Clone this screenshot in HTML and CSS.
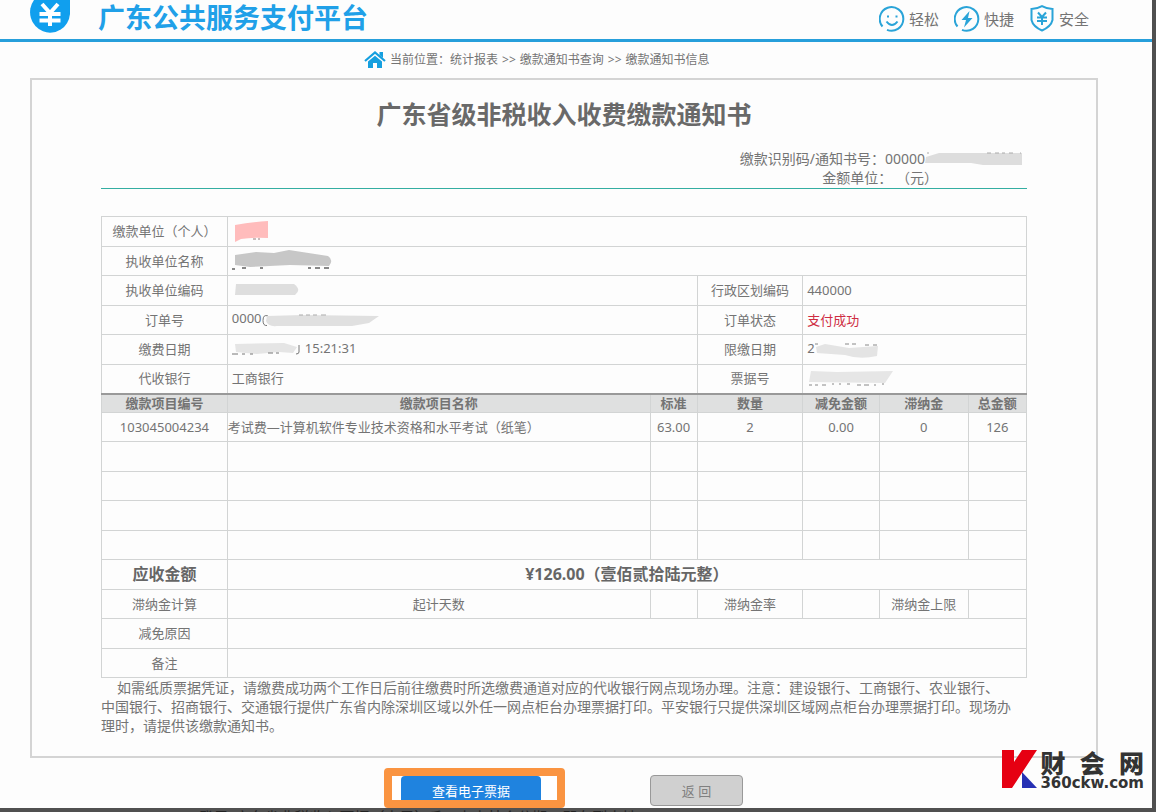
FILE: index.html
```html
<!DOCTYPE html>
<html lang="zh-CN">
<head>
<meta charset="utf-8">
<title>广东公共服务支付平台</title>
<link rel="stylesheet" href="styles.css">
</head>
<body>
<div class="page">
  <header class="top">
    <svg class="logo" width="40" height="35" viewBox="0 0 40 35" aria-hidden="true"><path d="M4 0H40V14A20 20.500 0 1 1 4 0Z" fill="#109fee"/><path d="M12 4l8 9 8-9M20 13v13M9.500 14h21M9.500 20.500h21" fill="none" stroke="#fff" stroke-width="4"/></svg>
    <h1 class="brand">广东公共服务支付平台</h1>
    <ul class="perks">
      <li><svg width="26" height="26" viewBox="0 0 26 26"><path d="M3.500 20.500A11.800 11.800 0 1 1 8 23.800" /><path d="M7.500 15.500q5.500 7 11 0"/><path class="solid" d="M8 9.500h2v2H8zM16.500 9.500h2v2h-2z"/></svg>轻松</li>
      <li><svg width="26" height="26" viewBox="0 0 26 26"><path d="M3.500 20.500A11.800 11.800 0 1 1 8 23.800"/><path class="solid" d="M15.500 5L7.500 14h4.500l-2 7.500L18.500 12H14z"/></svg>快捷</li>
      <li><svg width="26" height="27" viewBox="0 0 26 27"><path d="M13 1.200Q18 4 23.500 4V15Q22 21.500 13 25.500Q4 21.500 2.500 15V4Q8 4 13 1.200Z"/><path d="M9 7.500l4 4.500 4-4.500M13 12v8M8 12.500h10M8 16h10"/></svg>安全</li>
    </ul>
  </header>

  <nav class="crumbs">
    <svg width="22" height="18" viewBox="0 0 22 18" aria-hidden="true"><path d="M1 10L11 1.500 21 10" fill="none" stroke="#159fdf" stroke-width="2.200"/><path d="M15.500 1H19v6l-3.500-3z" fill="#159fdf"/><path d="M4 10.500L11 4.800l7 5.700V17h-5v-5H9v5H4z" fill="#159fdf"/></svg>
    <span>当前位置：</span><span>统计报表</span><span class="sep">&gt;&gt;</span><span>缴款通知书查询</span><span class="sep">&gt;&gt;</span><span>缴款通知书信息</span>
  </nav>

  <main class="sheet">
    <h2 class="title">广东省级非税收入收费缴款通知书</h2>
    <div class="meta">
      <div class="meta-row">缴款识别码/通知书号：00000<svg width="102" height="20" viewBox="0 0 102 20"><path d="M1 8L14 4 97 4V16H58L46 14H0Z" fill="#ddd"/><path d="M2 4h2M62 4h4M70 4h4M77 4h3M84 4h4M95 4h1" stroke="#aaa"/></svg></div>
      <div class="meta-row unit">金额单位：&nbsp;（元）</div>
    </div>

    <table class="bill">
      <colgroup><col class="c1"><col class="c2"><col class="c3"><col class="c4"><col class="c5"><col class="c6"><col class="c7"></colgroup>
      <tbody>
        <tr><th>缴款单位（个人）</th><td class="val" colspan="6"><svg width="60" height="24" viewBox="0 0 60 24"><path d="M3 6Q20 3 36 2V19Q20 18 9 20L3 23Z" fill="#ffbcbc"/><path d="M21 20h3M26 20h2" stroke="#957b7b"/></svg></td></tr>
        <tr><th>执收单位名称</th><td class="val" colspan="6"><svg width="110" height="24" viewBox="0 0 110 24"><path d="M3 6L24 3 42 4 57 1 96 7Q102 11 97 17L58 16 18 18 3 16Z" fill="#c7c7c7"/><path d="M0 20h3M10 19h4M28 19h3M76 19h3M83 19h5M92 19h5" stroke="#888" stroke-width="2"/></svg></td></tr>
        <tr><th>执收单位编码</th><td class="val" colspan="2"><svg width="80" height="20" viewBox="0 0 80 20"><path d="M4 4H62Q70 10 63 15H3Z" fill="#dedede"/></svg></td><th>行政区划编码</th><td class="val" colspan="3">440000</td></tr>
        <tr><th>订单号</th><td class="val" colspan="2">0000<svg width="130" height="20" viewBox="0 0 130 20"><path d="M6 6Q1 4 1 10.500Q1 16 5 15.500" fill="none" stroke="#777"/><path d="M5 6L40 5 117 6 107 13 90 16H15Q6 17 4 11Z" fill="#e0e0e0"/><path d="M37 5h4M44 5h4M51 5h4M59 5h5" stroke="#aaa"/></svg></td><th>订单状态</th><td class="val paid" colspan="3">支付成功</td></tr>
        <tr><th>缴费日期</th><td class="val" colspan="2"><svg width="73" height="20" viewBox="0 0 73 20"><path d="M3 5L52 4 65 8 61 14 47 13 25 15 4 13Z" fill="#e5e5e5"/><path d="M0 15h6M10 15h3M18 15h3M36 14h5M44 14h3M67 6v7q0 2-3 2" fill="none" stroke="#777"/></svg>15:21:31</td><th>限缴日期</th><td class="val" colspan="3">2<svg width="70" height="20" viewBox="0 0 70 20"><path d="M1 8L10 5 34 9 63 7 62 17Q45 21 30 16L2 14Z" fill="#e4e4e4"/><path d="M0 5h3M30 5h4M37 5h4M50 6h4M58 6h4" stroke="#888"/></svg></td></tr>
        <tr><th>代收银行</th><td class="val" colspan="2">工商银行</td><th>票据号</th><td class="val" colspan="3"><svg width="90" height="20" viewBox="0 0 90 20"><path d="M4 2L30 3 86 2 78 14 2 13Z" fill="#e6e6e6"/><path d="M2 16h3M8 16h3M15 16h4M25 15h2M32 15h2M40 15h3M50 16h4M57 16h5M67 16h2M75 15h2" stroke="#888"/></svg></td></tr>
        <tr class="head"><th>缴款项目编号</th><th>缴款项目名称</th><th>标准</th><th>数量</th><th>减免金额</th><th>滞纳金</th><th>总金额</th></tr>
        <tr><td>103045004234</td><td class="item">考试费—计算机软件专业技术资格和水平考试（纸笔）</td><td>63.00</td><td>2</td><td>0.00</td><td>0</td><td>126</td></tr>
        <tr><td></td><td></td><td></td><td></td><td></td><td></td><td></td></tr>
        <tr><td></td><td></td><td></td><td></td><td></td><td></td><td></td></tr>
        <tr><td></td><td></td><td></td><td></td><td></td><td></td><td></td></tr>
        <tr><td></td><td></td><td></td><td></td><td></td><td></td><td></td></tr>
        <tr class="total"><th>应收金额</th><td colspan="6">¥126.00（壹佰贰拾陆元整）</td></tr>
        <tr><th>滞纳金计算</th><td>起计天数</td><td></td><th>滞纳金率</th><td></td><th>滞纳金上限</th><td></td></tr>
        <tr><th>减免原因</th><td colspan="6"></td></tr>
        <tr><th>备注</th><td colspan="6"></td></tr>
      </tbody>
    </table>
    <p class="note">如需纸质票据凭证，请缴费成功两个工作日后前往缴费时所选缴费通道对应的代收银行网点现场办理。注意：建设银行、工商银行、农业银行、<br>中国银行、招商银行、交通银行提供广东省内除深圳区域以外任一网点柜台办理票据打印。平安银行只提供深圳区域网点柜台办理票据打印。现场办<br>理时，请提供该缴款通知书。</p>
  </main>

  <div class="actions">
    <div class="mark"><button class="view" type="button">查看电子票据</button></div>
    <button class="back" type="button">返 回</button>
  </div>

  <div class="stamp">
    <svg width="35" height="38" viewBox="0 0 35 38" aria-hidden="true"><path d="M0 0H12V12L20 0H35L10 38H0Z" fill="#e60012"/><path d="M20 22L35 38H20Z" fill="#2630b4"/></svg>
    <div class="stamp-text"><div class="stamp-name"><span>财</span><span>会</span><span>网</span></div><div class="stamp-url">360ckw.com</div></div>
  </div>
</div>
<div class="strip">三、登录“广东省非税收入票据（电子）”后，点击某个分期，即存到本地。</div>
</body>
</html>
```
FILE: styles.css
```css
* { box-sizing: border-box; }
body {
  margin: 0;
  background: #505050;
  color: #747474;
  font: 13px/18px "Noto Sans", "Noto Sans CJK SC", sans-serif;
  overflow: hidden;
}
h1, h2, p, ul { margin: 0; padding: 0; }
.page { position: relative; margin-right: 4px; background: #fdfdfd; }
.top {
  display: flex;
  align-items: flex-start;
  height: 42px;
  padding: 0 63px 0 30px;
  border-bottom: 3px solid #279fdb;
}
.brand { flex: 1; margin-left: 28px; color: #20a0e8; font-size: 27px; line-height: 36px; font-weight: 700; }
.perks { display: flex; gap: 15px; padding-top: 5px; list-style: none; font-size: 15px; }
.perks li { display: flex; align-items: center; gap: 4px; height: 27px; }
.perks path { fill: none; stroke: #2aa4d8; stroke-width: 2; }
.perks .solid { fill: #2aa4d8; stroke: none; }
.crumbs { display: flex; align-items: center; height: 36px; padding-left: 364px; font-size: 12px; }
.crumbs svg { margin-right: 4px; }
.sep { margin: 0 4px; }
.sheet { margin: 0 54px 0 30px; padding: 14px 69px 21px; border: 2px solid #d4d4d4; }
.title { text-align: center; font-size: 25px; line-height: 40px; color: #696969; }
.meta { display: flex; flex-direction: column; align-items: flex-end; padding: 15px 0 1px; border-bottom: 1px solid #34aea2; font-size: 14px; line-height: 19px; }
.meta-row { display: flex; height: 19px; }
.unit { padding-right: 89px; }
.bill { width: 100%; margin-top: 27px; border-collapse: collapse; table-layout: fixed; }
.c1 { width: 13.600%; } .c2 { width: 45.700%; } .c3 { width: 5.100%; } .c4 { width: 11.400%; }
.c5 { width: 8.300%; } .c6 { width: 9.600%; } .c7 { width: 6.300%; }
.bill th, .bill td { height: 29px; padding: 0 0 1px; border: 1px solid #d2d4d4; text-align: center; font-weight: 400; white-space: nowrap; }
.bill tr:nth-child(odd) td { height: 30px; }
.bill .val { padding-left: 4px; text-align: left; }
.bill .val svg, .meta svg { vertical-align: middle; }
.bill .item { text-align: left; }
.bill .paid { color: #cf2d43; }
.bill .head th { height: 19px; padding: 0; line-height: 17px; background: #dfe0e0; border-top: 2px solid #999; font-weight: 700; }
.bill .total th, .bill .total td { font-size: 16px; font-weight: 700; color: #666; }
.note { font-size: 14px; line-height: 19px; text-indent: 16px; }
.actions { display: flex; align-items: flex-start; gap: 85px; height: 50px; padding: 10px 0 0 384px; }
.mark { display: flex; width: 181px; height: 40px; padding-left: 9px; border: 8px solid #fa9441; border-radius: 4px; background: #fff; }
button { font: inherit; padding: 0; }
.view { width: 140px; border: 0; border-radius: 4px 4px 0 0; background: #1f83df; color: #fff; padding-top: 6px; }
.back { width: 93px; height: 31px; margin-top: 7px; border: 1px solid #999; border-radius: 4px; background: #d0d0d0; color: #808080; }
.stamp { position: absolute; right: 8px; bottom: 17px; display: flex; gap: 3px; color: #333; }
.stamp-name { display: flex; justify-content: space-between; font-size: 25px; line-height: 26px; font-weight: 900; }
.stamp-url { font: 700 15px/15px "DejaVu Sans", sans-serif; }
.strip { height: 4px; padding-left: 169px; overflow: hidden; color: #222; font-size: 15px; line-height: 18px; white-space: nowrap; }
```
